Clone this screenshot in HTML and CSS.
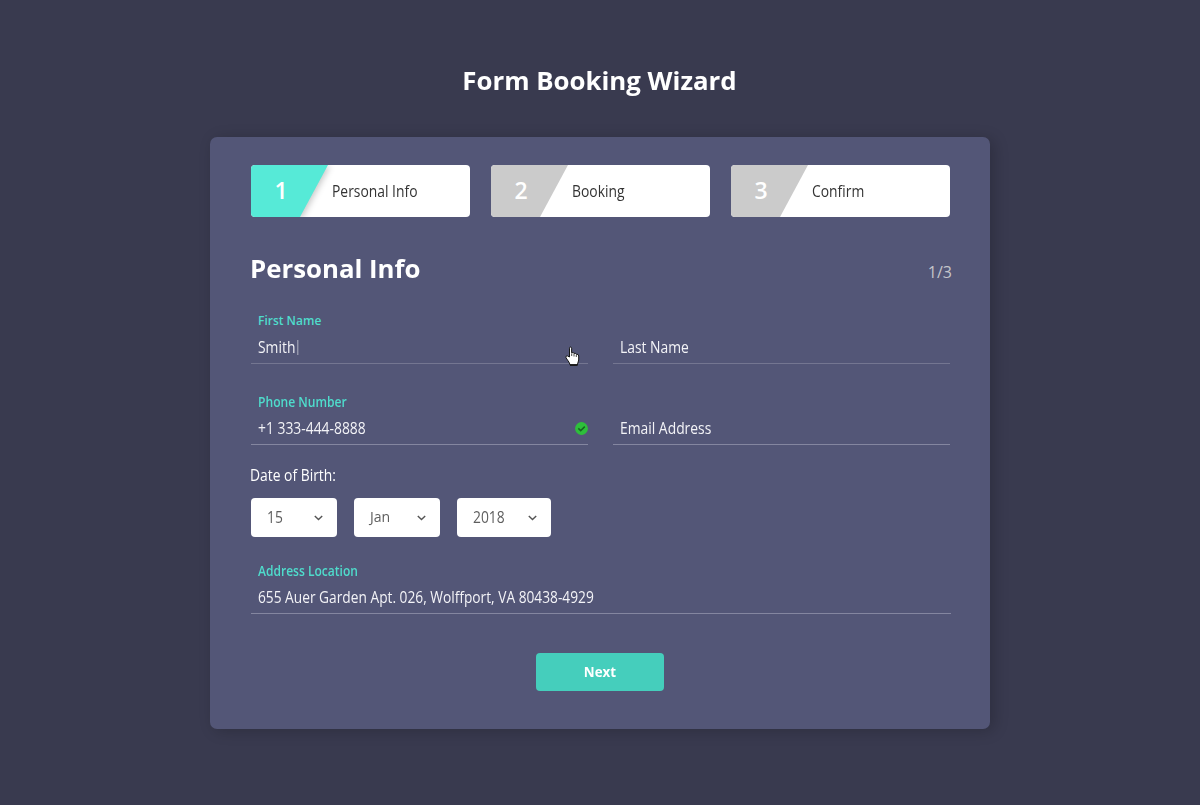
FILE: index.html
```html
<!DOCTYPE html>
<html lang="en">
<head>
<meta charset="utf-8">
<title>Form Booking Wizard</title>
<link rel="stylesheet" href="styles.css">
</head>
<body>
<h1 class="page-title">Form Booking Wizard</h1>
<main class="card">
  <nav class="steps">
    <div class="step">
      <svg class="step-shape" viewBox="0 0 90 52"><path class="active shade" d="M0 0H77L49 52H0Z"/></svg>
      <span class="step-number">1</span><span class="step-label">Personal Info</span>
    </div>
    <div class="step">
      <svg class="step-shape" viewBox="0 0 90 52"><path d="M0 0H77L49 52H0Z"/></svg>
      <span class="step-number">2</span><span class="step-label">Booking</span>
    </div>
    <div class="step">
      <svg class="step-shape" viewBox="0 0 90 52"><path d="M0 0H77L49 52H0Z"/></svg>
      <span class="step-number">3</span><span class="step-label">Confirm</span>
    </div>
  </nav>
  <header class="section-head">
    <h2>Personal Info</h2>
    <span class="progress">1/3</span>
  </header>
  <div class="row row-name">
    <div class="field faint">
      <span class="label label-first">First Name</span>
      <span class="value">Smith<i class="caret"></i></span>
      <svg class="cursor" viewBox="0 0 15 20"><path d="M4.5 11V2.2Q4.5 1 5.5 1T6.6 2.2V6.8Q8.5 6 9 7.4Q10.7 6.8 11.2 8.3Q13.6 7.6 13.7 10V14L12.3 19H5.2L4 16.2L1 11.8Q.5 9.8 2.2 9.8Z"/><path class="creases" d="M6.7 7.5V10M9 8V10.5M11.3 9V11"/><path class="cuff" d="M5 19H12.5"/></svg>
    </div>
    <div class="field faint">
      <span class="label"></span>
      <span class="value">Last Name</span>
    </div>
  </div>
  <div class="row row-contact">
    <div class="field">
      <span class="label">Phone Number</span>
      <span class="value">+1 333-444-8888</span>
      <svg class="check" viewBox="0 0 13 13"><circle cx="6.5" cy="6.5" r="6.4"/><path d="M3.3 6.4L5.7 8.6L9.8 4.6"/></svg>
    </div>
    <div class="field">
      <span class="label"></span>
      <span class="value">Email Address</span>
    </div>
  </div>
  <div class="birth">Date of Birth:</div>
  <div class="selects">
    <div class="select"><span>15</span><svg class="chevron" viewBox="0 0 9 6"><path d="M.8 .9L4.5 4.6L8.2 .9"/></svg></div>
    <div class="select"><span class="month">Jan</span><svg class="chevron" viewBox="0 0 9 6"><path d="M.8 .9L4.5 4.6L8.2 .9"/></svg></div>
    <div class="select wide"><span>2018</span><svg class="chevron" viewBox="0 0 9 6"><path d="M.8 .9L4.5 4.6L8.2 .9"/></svg></div>
  </div>
  <div class="row row-address">
    <div class="field">
      <span class="label label-address">Address Location</span>
      <span class="value address">655 Auer Garden Apt. 026, Wolffport, VA 80438-4929</span>
    </div>
  </div>
  <button class="next" type="button"><span>Next</span></button>
</main>
</body>
</html>
```
FILE: styles.css
```css
* { box-sizing: border-box; }
body {
  margin: 0;
  height: 805px;
  padding-top: 62px;
  overflow: hidden;
  background: #393a4f;
  color: #fff;
  font-family: "Open Sans", sans-serif;
}
.page-title {
  margin: 0;
  padding-right: 1px;
  font-size: 25px;
  line-height: 36px;
  height: 36px;
  font-weight: 700;
  text-align: center;
  transform: scaleX(1.032);
}
.card {
  width: 780px;
  height: 592px;
  margin: 39px auto 0;
  padding: 28px 39px 0 41px;
  display: flex;
  flex-direction: column;
  background: #535677;
  border-radius: 7px;
  box-shadow: 4px 2px 15px rgba(0, 0, 0, .2);
}
.steps { display: flex; gap: 21px; }
.step {
  position: relative;
  display: flex;
  align-items: center;
  width: 219px;
  height: 52px;
  overflow: hidden;
  background: #fff;
  border-radius: 4px;
  color: #333;
}
.step-shape { position: absolute; left: 0; top: 0; width: 90px; height: 52px; fill: #cbcbcb; }
.step-shape .active { fill: #56ead7; }
.step-shape .shade { filter: drop-shadow(2px 1px 3px rgba(0, 0, 0, .22)); }
.step-number {
  position: relative;
  width: 81px;
  padding: 0 0 2px 23.5px;
  font-size: 23px;
  line-height: 30px;
  font-weight: 600;
  color: #fff;
}
.step-label {
  font-size: 15.5px;
  line-height: 20px;
  white-space: nowrap;
  transform: scaleX(.895);
  transform-origin: left;
}
.section-head {
  display: flex;
  justify-content: space-between;
  height: 36px;
  margin-top: 33px;
}
.section-head h2 {
  margin: 0 0 0 -1px;
  font-size: 25px;
  line-height: 37px;
  font-weight: 700;
  transform: scaleX(1.032);
  transform-origin: left;
}
.progress { font-size: 16px; line-height: 22px; margin: 11px -1px 0 0; color: #c5c5ca; }
.row { display: flex; gap: 25px; width: 699px; }
.row-name { margin-top: 25px; }
.field {
  position: relative;
  flex: 1;
  display: flex;
  flex-direction: column;
  align-items: flex-start;
  padding-left: 7px;
  border-bottom: 1px solid #8486a0;
}
.field.faint { border-color: #747691; }
.label {
  height: 20px;
  font-size: 14px;
  line-height: 20px;
  font-weight: 600;
  color: #4fdccc;
  white-space: nowrap;
  transform: scaleX(.865);
  transform-origin: left;
}
.label-first { font-size: 12px; transform: none; }
.label-address { transform: scaleX(.86); }
.value {
  display: flex;
  align-items: center;
  height: 20px;
  margin: 6px 0 6px;
  font-size: 15.5px;
  line-height: 20px;
  color: #f3f3f7;
  white-space: nowrap;
  transform: scaleX(.895);
  transform-origin: left;
}
.value.address { transform: scaleX(.886); }
.caret { width: 1.2px; height: 15px; margin-left: 2px; background: #bbbcc9; }
.cursor { position: absolute; left: 314px; top: 35px; width: 15px; height: 20px; fill: #fff; stroke: #171717; stroke-width: 1; }
.cursor .creases { fill: none; stroke-width: .8; }
.cursor .cuff { stroke-width: 1.8; }
.row-contact { margin-top: 28px; }
.check { position: absolute; left: 324px; top: 30px; width: 13px; height: 13px; fill: #2ebf3b; }
.check path { fill: none; stroke: #17661f; stroke-width: 1.5; }
.birth {
  align-self: flex-start;
  height: 20px;
  margin: 21px 0 0 -1px;
  font-size: 15.5px;
  line-height: 19px;
  transform: scaleX(.895);
  transform-origin: left;
}
.selects { display: flex; gap: 17px; margin-top: 12px; }
.select {
  display: flex;
  align-items: center;
  justify-content: space-between;
  width: 86px;
  height: 39px;
  padding: 0 14px 0 16px;
  background: #fff;
  border-radius: 4px;
  color: #5e5e5e;
  font-size: 16px;
  line-height: 38px;
}
.select span { height: 39px; transform: scaleX(.865); transform-origin: left; }
.select .month { font-size: 15px; transform: scaleX(.94); line-height: 37px; }
.select.wide { width: 94px; }
.chevron { width: 9px; height: 6px; fill: none; stroke: #555; stroke-width: 1.4; }
.row-address { width: 700px; margin-top: 24px; }
.next {
  align-self: center;
  width: 128px;
  height: 38px;
  margin: 39px 2px 0 0;
  padding: 0;
  border: 0;
  border-radius: 4px;
  background: #45cebc;
  color: #fff;
  font: 700 15px/36px "Open Sans", sans-serif;
}
.next span { display: block; height: 38px; transform: scaleX(.89); }
```
